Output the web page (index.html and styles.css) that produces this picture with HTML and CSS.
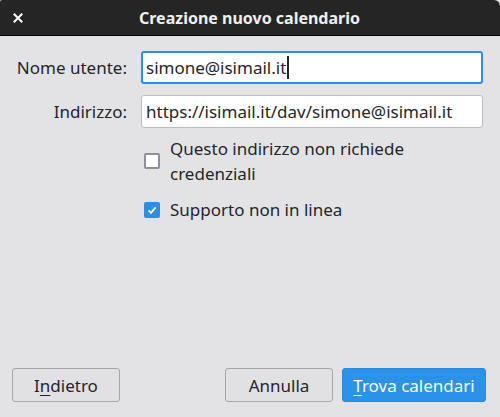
FILE: index.html
```html
<!DOCTYPE html>
<html lang="it">
<head>
<meta charset="utf-8">
<title>Creazione nuovo calendario</title>
<link rel="stylesheet" href="styles.css">
</head>
<body>
<div class="window">
  <div class="titlebar">
    <span class="close">
      <svg width="10" height="10" viewBox="0 0 10 10"><path d="M1.5 1.5 L8.5 8.5 M8.5 1.5 L1.5 8.5" stroke="#fff" stroke-width="2" stroke-linecap="square"/></svg>
    </span>
    <span class="title">Creazione nuovo calendario</span>
  </div>
  <div class="content">
    <div class="form">
      <label class="label">Nome utente:</label>
      <div class="field focused">simone@isimail.it<span class="caret"></span></div>
      <label class="label">Indirizzo:</label>
      <div class="field">https://isimail.it/dav/simone@isimail.it</div>
      <div class="checks">
        <div class="check">
          <span class="box"></span>
          <span class="check-text">Questo indirizzo non richiede credenziali</span>
        </div>
        <div class="check">
          <span class="box checked">
            <svg width="12" height="12" viewBox="0 0 12 12"><path d="M2.5 6.3 L5 8.8 L9.6 3.4" fill="none" stroke="#fff" stroke-width="1.8"/></svg>
          </span>
          <span class="check-text">Supporto non in linea</span>
        </div>
      </div>
    </div>
    <div class="footer">
      <button class="btn">I<u>n</u>dietro</button>
      <div class="spacer"></div>
      <button class="btn">Annulla</button>
      <button class="btn primary"><u>T</u>rova calendari</button>
    </div>
  </div>
</div>
</body>
</html>
```
FILE: styles.css
```css
html, body {
  margin: 0;
  padding: 0;
  background: #e4e4e7;
}
body {
  font-family: "Noto Sans", "Open Sans", sans-serif;
  color: #232629;
  font-size: 17px;
}
.window {
  width: 500px;
  height: 417px;
  display: flex;
  flex-direction: column;
  background: #e3e3e6;
}
.titlebar {
  height: 35px;
  background: #252525;
  border-bottom: 1px solid #000;
  border-radius: 2px 6px 0 0;
  position: relative;
  display: flex;
  align-items: center;
  justify-content: center;
}
.close {
  position: absolute;
  left: 13px;
  top: 13px;
  width: 10px;
  height: 10px;
  display: flex;
}
.title {
  color: #f0f0f0;
  font-weight: bold;
  font-size: 16px;
  margin-left: -1px;
}
.content {
  flex: 1;
  display: flex;
  flex-direction: column;
  padding: 15px 0 15px 0;
}
.form {
  display: grid;
  grid-template-columns: 1fr 342px;
  column-gap: 14px;
  row-gap: 11px;
  padding-right: 17px;
  align-items: center;
}
.label {
  justify-self: end;
  white-space: nowrap;
}
.field {
  box-sizing: border-box;
  height: 33px;
  background: #fff;
  border: 1px solid #bcbcbf;
  border-radius: 3px;
  padding: 0 4px;
  display: flex;
  align-items: center;
  white-space: nowrap;
}
.field.focused {
  border: 2px solid #2b8fe6;
  padding: 0 3px;
}
.caret {
  display: inline-block;
  width: 2px;
  height: 23px;
  background: #232629;
  margin-left: 1px;
}
.checks {
  grid-column: 2;
  display: flex;
  flex-direction: column;
  gap: 11px;
  padding-left: 3px;
  margin-top: -3px;
}
.check {
  display: flex;
  align-items: center;
  gap: 10px;
  line-height: 25px;
}
.box {
  flex: none;
  width: 16px;
  height: 16px;
  box-sizing: border-box;
  border: 2px solid #8f8f97;
  border-radius: 2px;
  background: #fff;
  display: flex;
  align-items: center;
  justify-content: center;
}
.box.checked {
  background: #2b8fe6;
  border-color: #2b8fe6;
}
.footer {
  margin-top: auto;
  display: flex;
  align-items: center;
  gap: 9px;
  padding: 0 14px 0 12px;
}
.spacer {
  flex: 1;
}
.btn {
  font-family: inherit;
  font-size: 17px;
  color: #232629;
  height: 34px;
  width: 108px;
  background: #e1e1e4;
  border: 1px solid #a6a6aa;
  border-radius: 3px;
  padding: 0;
}
.btn u {
  text-underline-offset: 3px;
}
.btn.primary {
  width: 144px;
  background: #2a92e8;
  border-color: #2a8ad8;
  color: #fcfcfc;
}
```
